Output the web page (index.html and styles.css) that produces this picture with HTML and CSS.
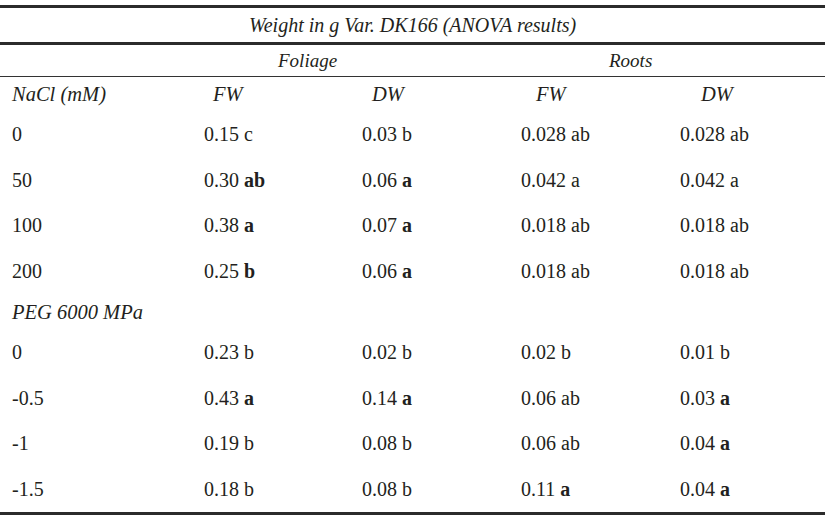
FILE: index.html
```html
<!DOCTYPE html>
<html lang="en">
<head>
<meta charset="utf-8">
<title>Weight in g Var. DK166 (ANOVA results)</title>
<link rel="stylesheet" href="styles.css">
</head>
<body>
<table class="anova">
  <colgroup>
    <col class="c1"><col class="c2"><col class="c3"><col class="c4"><col class="c5">
  </colgroup>
  <thead>
    <tr class="r-title"><th colspan="5">Weight in g Var. DK166 (ANOVA results)</th></tr>
    <tr class="r-group">
      <th></th>
      <th colspan="2" class="g-foliage">Foliage</th>
      <th colspan="2" class="g-roots">Roots</th>
    </tr>
    <tr class="r-head">
      <th class="h1">NaCl (mM)</th>
      <th class="h2">FW</th>
      <th class="h3">DW</th>
      <th class="h4">FW</th>
      <th class="h5">DW</th>
    </tr>
  </thead>
  <tbody>
    <tr class="r-data"><td>0</td><td>0.15 c</td><td>0.03 b</td><td>0.028 ab</td><td>0.028 ab</td></tr>
    <tr class="r-data"><td>50</td><td>0.30 <b>ab</b></td><td>0.06 <b>a</b></td><td>0.042 a</td><td>0.042 a</td></tr>
    <tr class="r-data"><td>100</td><td>0.38 <b>a</b></td><td>0.07 <b>a</b></td><td>0.018 ab</td><td>0.018 ab</td></tr>
    <tr class="r-data"><td>200</td><td>0.25 <b>b</b></td><td>0.06 <b>a</b></td><td>0.018 ab</td><td>0.018 ab</td></tr>
    <tr class="r-section"><td class="sec">PEG 6000 MPa</td><td></td><td></td><td></td><td></td></tr>
    <tr class="r-data"><td>0</td><td>0.23 b</td><td>0.02 b</td><td>0.02 b</td><td>0.01 b</td></tr>
    <tr class="r-data"><td>-0.5</td><td>0.43 <b>a</b></td><td>0.14 <b>a</b></td><td>0.06 ab</td><td>0.03 <b>a</b></td></tr>
    <tr class="r-data"><td>-1</td><td>0.19 b</td><td>0.08 b</td><td>0.06 ab</td><td>0.04 <b>a</b></td></tr>
    <tr class="r-data"><td>-1.5</td><td>0.18 b</td><td>0.08 b</td><td>0.11 <b>a</b></td><td>0.04 <b>a</b></td></tr>
  </tbody>
</table>
</body>
</html>
```

FILE: styles.css
```css
html, body {
  margin: 0;
  padding: 0;
  background: #ffffff;
}

body {
  font-family: "Liberation Serif", "Times New Roman", serif;
  color: #231f20;
}

.anova {
  border-collapse: separate;
  border-spacing: 0;
  width: 825px;
  table-layout: fixed;
  margin-top: 5px;
  border-top: 3px solid #2b2b2b;
  border-bottom: 3px solid #2b2b2b;
}

.c1 { width: 197px; }
.c2 { width: 158px; }
.c3 { width: 159px; }
.c4 { width: 158px; }
.c5 { width: 153px; }

th, td {
  padding: 0;
  text-align: left;
  vertical-align: middle;
  white-space: nowrap;
}

th {
  font-weight: normal;
  font-style: italic;
}

.r-title th {
  text-align: center;
  font-size: 20px;
  line-height: 34px;
  border-bottom: 3px solid #2b2b2b;
}

.r-group th {
  font-size: 19px;
  line-height: 31px;
  border-bottom: 1px solid #333333;
}

.g-foliage { padding-left: 81px; }
.g-roots { padding-left: 95px; }

.r-head th {
  font-size: 20.5px;
  line-height: 35px;
}

.h1 { padding-left: 12px; }
.h2 { padding-left: 16px; }
.h3 { padding-left: 17px; }
.h4 { padding-left: 22px; }
.h5 { padding-left: 29px; }

.r-data td {
  font-size: 20px;
  line-height: 45.5px;
}

.r-section td {
  font-size: 20.5px;
  line-height: 36px;
}

.sec { font-style: italic; }

td:nth-child(1) { padding-left: 12px; }
td:nth-child(2) { padding-left: 7px; }
td:nth-child(3) { padding-left: 7px; }
td:nth-child(4) { padding-left: 7px; }
td:nth-child(5) { padding-left: 8px; }

td b {
  font-weight: bold;
}
```
